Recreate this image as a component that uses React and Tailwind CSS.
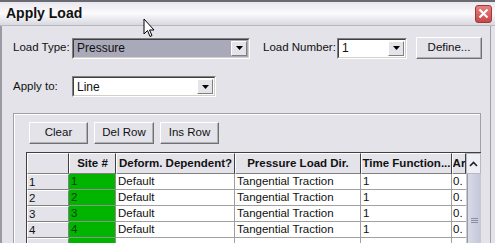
const cols = [
  { key: 'n', w: 'w-[42px]' },
  { key: 'site', w: 'w-[47px]', label: 'Site #' },
  { key: 'deform', w: 'w-[119px]', label: 'Deform. Dependent?' },
  { key: 'dir', w: 'w-[126px]', label: 'Pressure Load Dir.' },
  { key: 'tf', w: 'w-[91px]', label: 'Time Function...' },
  { key: 'a', w: 'w-[14px]', label: 'Ar' },
]

const rows = [1, 2, 3, 4, 5]

function Combo({ value, width, bg = 'bg-white' }) {
  return (
    <div className={`${width} shrink-0 h-[21px] flex border border-[#808080] border-r-white border-b-white`}>
      <div className={`flex-1 flex items-center ${bg} border border-[#404040] border-r-[#d4d0c8] border-b-[#d4d0c8] pr-[1px]`}>
        <span className="flex-1 pl-[3px] text-[12px] leading-none text-[#111] whitespace-nowrap">{value}</span>
        <div className="w-[16px] h-[15px] bg-[#e4e4ea] border border-white border-r-[#808080] border-b-[#808080] flex items-center justify-center">
          <svg width="7" height="4" viewBox="0 0 7 4"><path d="M0 0h7L3.5 4z" fill="#000" /></svg>
        </div>
      </div>
    </div>
  )
}

function Btn({ children, className = '' }) {
  return (
    <div className={`h-[22px] shrink-0 flex items-center justify-center whitespace-nowrap bg-[#e3e3e9] border border-white border-r-[#707070] border-b-[#707070] shadow-[inset_-1px_-1px_0_#b0b0b8] text-[11.5px] text-[#111] ${className}`}>
      {children}
    </div>
  )
}

export default function App() {
  return (
    <div className="relative w-[495px] h-[243px] overflow-hidden bg-[#e3e3e9] font-['Liberation_Sans',Arial,sans-serif] text-[#111]">
      <div className="h-[26px] flex items-center justify-between border-t-2 border-[#6a6a72] bg-gradient-to-b from-[#e8e8ee] via-[#fbfbfd] to-[#d8d8e0] border-b border-b-[#b8b8c0] pl-[6px] pr-[3px]">
        <span className="text-[14px] font-bold text-[#111]">Apply Load</span>
        <div className="w-[17px] h-[18px] rounded-[3px] bg-gradient-to-b from-[#e88080] to-[#c84848] border border-[#a03838] flex items-center justify-center">
          <svg width="11" height="11" viewBox="0 0 11 11"><path d="M1.5 1.5l8 8M9.5 1.5l-8 8" stroke="#fff" strokeWidth="2.2" /></svg>
        </div>
      </div>

      <div className="flex h-[217px] border-l-2 border-[#9a9aa2]">
        <div className="flex-1 flex flex-col">
          <div className="flex items-center mt-[11px] ml-[11px]">
            <span className="w-[59px] shrink-0 whitespace-nowrap text-[11.5px]">Load Type:</span>
            <Combo value="Pressure" width="w-[178px]" bg="bg-[#a9a9b9]" />
            <span className="ml-[13px] w-[74px] shrink-0 whitespace-nowrap text-[11.5px]">Load Number:</span>
            <Combo value="1" width="w-[70px]" />
            <Btn className="ml-[9px] w-[66px]">Define...</Btn>
          </div>

          <div className="flex items-center mt-[17px] ml-[11px]">
            <span className="w-[59px] shrink-0 whitespace-nowrap text-[11.5px]">Apply to:</span>
            <Combo value="Line" width="w-[144px]" />
          </div>

          <div className="mt-[16px] ml-[11px] w-[468px] flex-1 border border-[#a0a0a8] border-b-0 shadow-[inset_1px_1px_0_#fff] pl-[12px] pt-[8px]">
            <div className="flex gap-[6px] ml-[3px]">
              <Btn className="w-[59px]">Clear</Btn>
              <Btn className="w-[60px]">Del Row</Btn>
              <Btn className="w-[59px]">Ins Row</Btn>
            </div>

            <div className="mt-[8px] flex w-[455px] border-l border-t border-[#404040]">
              <div className="flex flex-col">
                <div className="flex h-[21px]">
                  {cols.map(c => (
                    <div key={c.key} className={`${c.w} h-full overflow-hidden whitespace-nowrap bg-[#e3e3e9] border border-white border-r-[#404040] border-b-[#808080] flex items-center justify-center text-[11.5px] font-bold`}>
                      {c.label}
                    </div>
                  ))}
                </div>
                {rows.map(r => (
                  <div key={r} className="flex h-[16px] text-[11.5px]">
                    <div className="w-[42px] h-full bg-[#e3e3e9] border border-white border-r-[#808080] border-b-[#808080] pl-[1px] leading-[14px]">{r < 5 ? r : ''}</div>
                    <div className="w-[47px] h-full bg-[#00b400] border-r border-b border-[#909090] pl-[2px] leading-[15px] text-[#0b3d0b]">{r < 5 ? r : ''}</div>
                    <div className="w-[119px] h-full bg-white border-r border-b border-[#a0a0a0] pl-[2px] leading-[15px]">{r < 5 ? 'Default' : ''}</div>
                    <div className="w-[126px] h-full bg-white border-r border-b border-[#a0a0a0] pl-[2px] leading-[15px] whitespace-nowrap">{r < 5 ? 'Tangential Traction' : ''}</div>
                    <div className="w-[91px] h-full bg-white border-r border-b border-[#a0a0a0] pl-[2px] leading-[15px]">{r < 5 ? '1' : ''}</div>
                    <div className="w-[14px] h-full bg-white border-b border-[#a0a0a0] pl-[1px] leading-[15px] overflow-hidden">{r < 5 ? '0.' : ''}</div>
                  </div>
                ))}
              </div>
              <div className="w-[15px] flex flex-col bg-[#c8c8d4]">
                <div className="h-[21px] bg-[#eef0f6] border border-[#b8b8c4] flex items-center justify-center">
                  <svg width="9" height="6" viewBox="0 0 9 6"><path d="M1 5l3.5-3.5L8 5" fill="none" stroke="#222" strokeWidth="1.6" /></svg>
                </div>
                <div className="flex-1 mx-[1px] bg-gradient-to-r from-[#d8dae6] to-[#c4c8da] border-l border-[#9a9aa8] flex items-start justify-center pt-[44px]">
                  <svg width="7" height="6" viewBox="0 0 7 6"><path d="M0 0.5h7M0 2.5h7M0 4.5h7" stroke="#8a8ca0" strokeWidth="1" /></svg>
                </div>
              </div>
            </div>
          </div>
        </div>
        <div className="w-[5px] border-l border-[#a0a0a8] bg-[#e3e3e9]" />
      </div>

      <svg className="absolute left-[143px] top-[18px]" width="13" height="20" viewBox="0 0 13 20">
        <path d="M1 1v15l3.5-3.5 2.5 6 2-1-2.5-5.5H11z" fill="#fff" stroke="#000" strokeWidth="1" strokeLinejoin="round" />
      </svg>
    </div>
  )
}
